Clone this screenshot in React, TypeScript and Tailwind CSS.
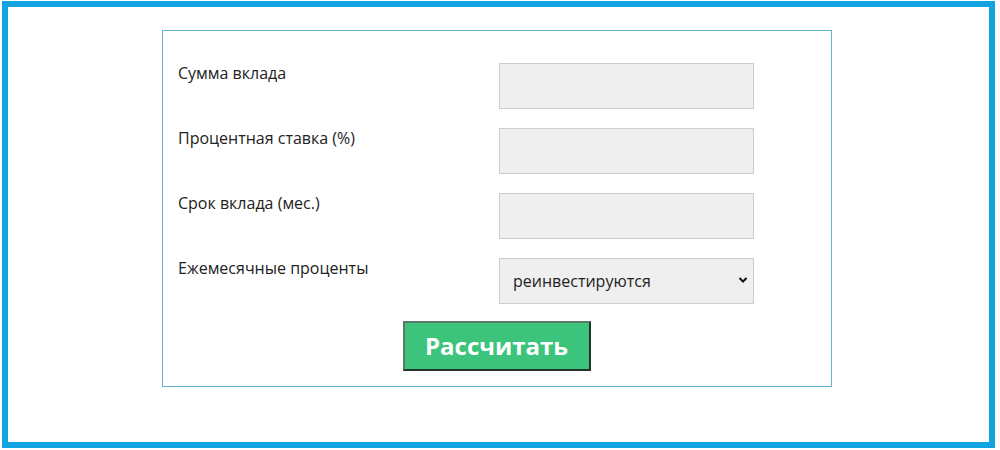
import React from "react";

const rows = [
  "Сумма вклада",
  "Процентная ставка (%)",
  "Срок вклада (мес.)",
];

export default function App() {
  return (
    <div className="w-[1000px] h-[450px] bg-white pl-[2px] pt-[1px]" style={{ fontFamily: '"Open Sans", "Noto Sans", sans-serif' }}>
      <div className="w-[993px] h-[447px] border-[6px] border-[#12a3e1] pl-[154px] pt-[23px]">
        <div className="w-[670px] h-[357px] border border-[#66b3d2] pl-[15px] pr-[77px] pt-[32px] flex flex-col">
          <div className="flex flex-col gap-[19px]">
            {rows.map((r) => (
              <div key={r} className="flex h-[46px] justify-between">
                <div className="text-[16px] leading-[20px] text-[#222]">{r}</div>
                <input className="w-[255px] h-[46px] bg-[#efefef] border border-[#cdcdcd] outline-none" />
              </div>
            ))}
            <div className="flex h-[46px] justify-between">
              <div className="text-[16px] leading-[20px] text-[#222]">Ежемесячные проценты</div>
              <div className="relative w-[255px] h-[46px] bg-[#efefef] border border-[#cdcdcd] flex items-center pl-[13px]">
                <span className="text-[16px] text-[#222]">реинвестируются</span>
                <svg className="absolute right-[5px] top-[17px]" width="10" height="8" viewBox="0 0 10 8">
                  <path d="M1.5 2 L5 5.5 L8.5 2" stroke="#111" strokeWidth="2" fill="none" />
                </svg>
              </div>
            </div>
          </div>
          <div className="flex justify-center mt-[17px] pl-[61px]">
            <button className="w-[188px] h-[50px] bg-[#3cc47c] border-2 border-t-[#5b7a68] border-l-[#5b7a68] border-r-[#24342a] border-b-[#24342a] text-white font-bold text-[24px] leading-none">
              Рассчитать
            </button>
          </div>
        </div>
      </div>
    </div>
  );
}
